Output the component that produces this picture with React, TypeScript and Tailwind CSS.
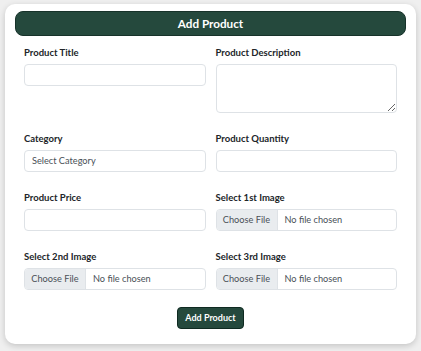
export default function App() {
  return (
    <div className="min-h-screen bg-[#efefef] px-[5px] pt-[4px] font-[family-name:Lato,sans-serif] text-[#212529]">
      <div className="rounded-[10px] bg-white px-[10px] pt-[7px] pb-[15px] shadow-[0_2px_6px_rgba(0,0,0,0.18)]">
        <div className="flex h-[25px] items-center justify-center rounded-[8px] border border-[#17322a] bg-[#25493d] text-[11.7px] font-bold text-white">
          Add Product
        </div>

        <form className="mt-[10px] px-[9px]" onSubmit={(e) => e.preventDefault()}>
          <div className="grid grid-cols-2 gap-x-[10px] gap-y-[19px]">
            <Field label="Product Title">
              <input type="text" className="block h-[22px] w-full rounded-[4px] border border-[#dee2e6] px-[7px] text-[9.2px] outline-none" />
            </Field>
            <Field label="Product Description">
              <textarea className="block h-[49px] w-full resize-y rounded-[4px] border border-[#dee2e6] px-[7px] text-[9.2px] outline-none" />
            </Field>

            <Field label="Category">
              <select className="block h-[22px] w-full appearance-none rounded-[4px] border border-[#dee2e6] bg-white px-[7px] text-[9.2px] text-[#495057] outline-none">
                <option>Select Category</option>
              </select>
            </Field>
            <Field label="Product Quantity">
              <input type="number" className="block h-[22px] w-full rounded-[4px] border border-[#dee2e6] px-[7px] text-[9.2px] outline-none" />
            </Field>

            <Field label="Product Price">
              <input type="number" className="block h-[22px] w-full rounded-[4px] border border-[#dee2e6] px-[7px] text-[9.2px] outline-none" />
            </Field>
            <Field label="Select 1st Image">
              <FilePick />
            </Field>

            <Field label="Select 2nd Image">
              <FilePick />
            </Field>
            <Field label="Select 3rd Image">
              <FilePick />
            </Field>
          </div>

          <div className="mt-[17px] flex justify-center">
            <button
              type="submit"
              className="h-[22px] rounded-[4px] border border-[#0f2a21] bg-[#25493d] px-[7px] text-[9px] font-bold text-white"
            >
              Add Product
            </button>
          </div>
        </form>
      </div>
    </div>
  );
}

function Field({ label, children }: { label: string; children: React.ReactNode }) {
  return (
    <div>
      <label className="mb-[4px] block h-[14px] text-[9.5px] font-bold leading-[14px]">{label}</label>
      {children}
    </div>
  );
}

function FilePick() {
  return (
    <div className="flex h-[22px] w-full items-stretch overflow-hidden rounded-[4px] border border-[#dee2e6] text-[9.2px] text-[#495057]">
      <span className="flex w-[61px] shrink-0 items-center justify-center border-r border-[#dee2e6] bg-[#e9ecef]">
        Choose File
      </span>
      <span className="flex items-center pl-[7px]">No file chosen</span>
    </div>
  );
}
